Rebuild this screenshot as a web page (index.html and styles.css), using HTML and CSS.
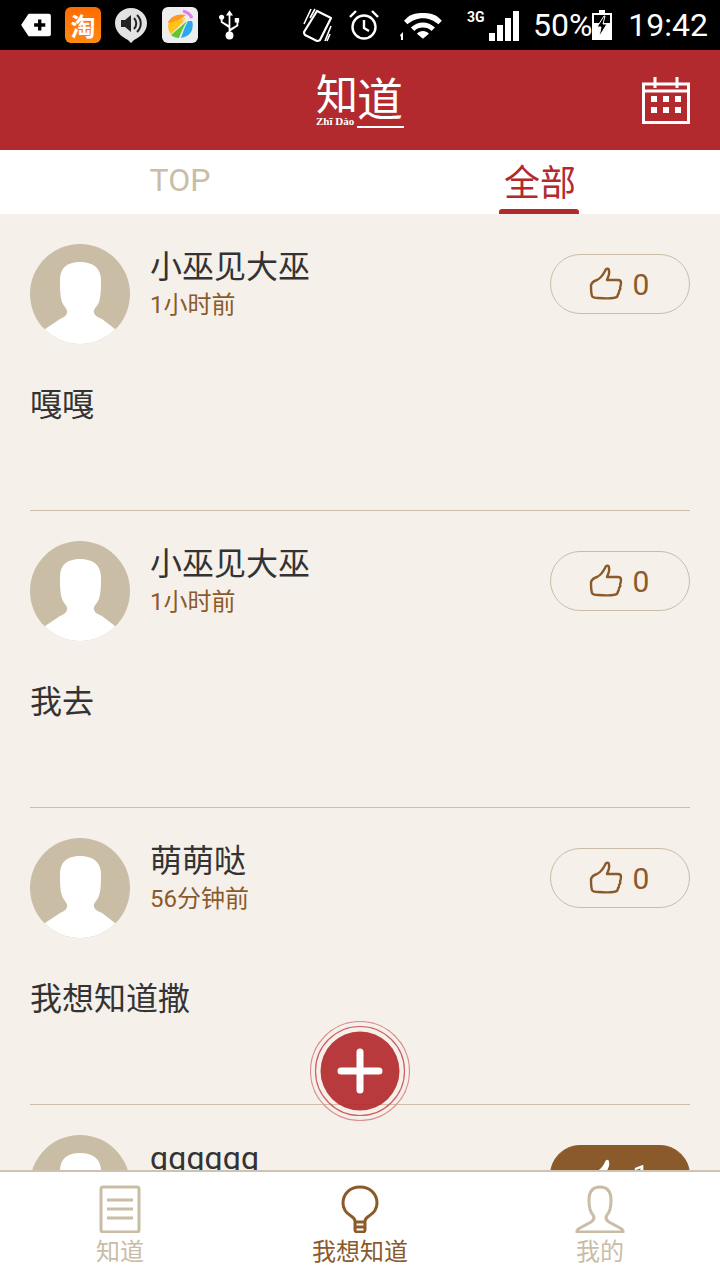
FILE: index.html
```html
<!DOCTYPE html>
<html lang="zh">
<head>
  <meta charset="UTF-8" />
  <title>知道</title>
  <link rel="stylesheet" href="styles.css">
</head>
<body>
  <svg class="defs" width="0" height="0">
    <symbol id="avatar" viewBox="0 0 100 100">
      <circle cx="50" cy="50" r="50" fill="#c9bda6"/>
      <path d="M50 18c-13 0-20 6-20 18 0 7 0 16 2 22 2 5 6 7 5 11-1 3-3 4-7 6L14.650 85.350A50 50 0 0 0 85.350 85.350L72 75c-4-2-7-3-8-6-1-4 3-6 5-11 2-6 2-15 2-22 0-12-8-18-21-18z" fill="#fff"/>
    </symbol>
    <symbol id="thumb" viewBox="0 0 34 34">
      <path d="M2 18c1-3 3-4 6-5 4-2 6-5 8-9 1-3 4-3 4 0 1 3-1 6-2 9h11c2 0 3 1 3 3s0 3-1 4c1 2 0 3-1 4 0 2 0 3-1 3 0 3-2 4-5 4-5 1-10 0-15 0-3 0-5 0-6-2-1-3-1-7-1-11z" fill="none" stroke="currentColor" stroke-width="2.400" stroke-linejoin="round"/>
    </symbol>
    <symbol id="thumb-solid" viewBox="0 0 34 34">
      <path d="M2 18c1-3 3-4 6-5 4-2 6-5 8-9 1-3 4-3 4 0 1 3-1 6-2 9h11c2 0 3 1 3 3s0 3-1 4c1 2 0 3-1 4 0 2 0 3-1 3 0 3-2 4-5 4-5 1-10 0-15 0-3 0-5 0-6-2-1-3-1-7-1-11z" fill="currentColor"/>
    </symbol>
  </svg>

  <div class="statusbar">
    <div class="status-left">
      <svg class="st-icon" width="32" height="26" viewBox="0 0 34 28"><path d="M9 2h22a2 2 0 0 1 2 2v20a2 2 0 0 1-2 2H9L1 14z" fill="#fff"/><path d="M15 14h12M21 8v12" stroke="#000" stroke-width="3.600"/></svg>
      <div class="tao">淘</div>
      <svg class="st-icon" width="34" height="36" viewBox="0 0 34 36"><path d="M17 1c9 0 16 7 16 15 0 9-7 14-13 17l-3 3-3-3C8 30 1 25 1 16 1 8 8 1 17 1z" fill="#e2e2e2"/><path d="M7 13h4l6-5v17l-6-5H7z" fill="#222"/><path d="M20 11c3 3 3 8 0 11M23 8c5 5 5 12 0 17" fill="none" stroke="#222" stroke-width="2"/></svg>
      <svg class="st-icon st-game" width="36" height="36" viewBox="0 0 36 36"><rect width="36" height="36" rx="6" fill="#eeeeee"/><path d="M6 15c3-6 10-9 18-7L9 20z" fill="#ff9a1f"/><path d="M6 17l3 4 15-10-1 0C16 13 10 15 6 17zM6 18c0 4 1 7 3 9l14-14z" fill="#ffc21a"/><path d="M9 28c2 2 5 3 8 3 2-6 5-12 8-17z" fill="#62c634"/><path d="M19 31c5-1 9-3 11-8 1-4 1-7 0-9l-4 0c-3 5-5 11-7 17z" fill="#2aa9ee"/><path d="M21 4c4 1 7 3 9 7" fill="none" stroke="#e37bf0" stroke-width="3"/></svg>
      <svg class="st-icon st-usb" width="21" height="30" viewBox="0 0 24 34"><path d="M12 0l4 6h-3v20h-2V6H8zM13 21l7-4v-3h-2V9h5v5h-1v4l-9 6zM11 17l-7-4v-2a3 3 0 1 0-2 0v3l9 6z" fill="#fff"/><circle cx="12" cy="29" r="4.500" fill="#fff"/></svg>
    </div>
    <div class="status-right">
      <svg class="st-icon" width="30" height="36" viewBox="0 0 30 36"><path d="M15 4l14 7-11 22c-1 1-2 1-3 1L3 28c-1-1-1-2-1-3z" fill="none" stroke="#fff" stroke-width="2.200" stroke-linejoin="round"/><path d="M9 2L2 17M13 2L8 11M29 19l-6 15M28 27l-3 7" fill="none" stroke="#fff" stroke-width="1.600"/></svg>
      <svg class="st-icon alarm" width="32" height="32" viewBox="0 0 32 32"><circle cx="16" cy="18" r="11.500" fill="none" stroke="#fff" stroke-width="2.400"/><path d="M16 11v8l5 3M2 8l6-6M30 8l-6-6" fill="none" stroke="#fff" stroke-width="2.400"/></svg>
      <svg class="st-icon wifi" width="44" height="30" viewBox="0 0 44 30"><path d="M0 9l3-3c5-5 12-6 19-6s14 1 19 6l3 3-4 4C35 9 29 6 22 6S9 9 4 13zM8 17c4-4 9-6 14-6s10 2 14 6l-4 4c-3-3-6-4-10-4s-7 1-10 4zM15 24c2-2 4-3 7-3s5 1 7 3l-7 6z" fill="#fff" transform="translate(5 3) scale(.86)"/><path d="M1 25l3-3v8H2v-3z" fill="#fff"/></svg>
      <div class="signal">
        <span class="net">3G</span>
        <i class="b1"></i><i class="b2"></i><i class="b3"></i><i class="b4"></i>
      </div>
      <span class="st-text pct">50%</span>
      <svg class="st-icon batt" width="20" height="30" viewBox="0 0 20 30"><path d="M7 0h6v3h7v27H0V3h7z" fill="#fff"/><path d="M2 5h16v8H2z" fill="#000"/><path d="M12 6l-7 11h4l-2 10 8-13h-4l2-8z" fill="#000" stroke="#fff" stroke-width="1"/></svg>
      <span class="st-text clock">19:42</span>
    </div>
  </div>

  <div class="header">
    <div class="logo">
      <div class="logo-left">
        <span class="logo-zhi">知</span>
        <span class="logo-pin">Zhī Dào</span>
      </div>
      <span class="logo-dao">道</span>
    </div>
    <svg class="calendar" width="48" height="48" viewBox="0 0 48 48">
      <path d="M1.500 8h45v38.500h-45zM1.500 15h45M13 1v11M35 1v11" fill="none" stroke="#fff" stroke-width="3"/>
      <path d="M9 20h6v6H9zM21 20h6v6h-6zM33 20h6v6h-6zM9 31h6v6H9zM21 31h6v6h-6zM33 31h6v6h-6z" fill="#fff"/>
    </svg>
  </div>

  <div class="tabs">
    <div class="tab">TOP</div>
    <div class="tab active">全部</div>
  </div>

  <div class="list">
    <div class="item">
      <div class="item-head">
        <svg class="avatar"><use href="#avatar"/></svg>
        <div class="who"><div class="name">小巫见大巫</div><div class="time">1小时前</div></div>
        <div class="like"><svg class="thumb"><use href="#thumb"/></svg><span>0</span></div>
      </div>
      <div class="body">嘎嘎</div>
    </div>
    <div class="item">
      <div class="item-head">
        <svg class="avatar"><use href="#avatar"/></svg>
        <div class="who"><div class="name">小巫见大巫</div><div class="time">1小时前</div></div>
        <div class="like"><svg class="thumb"><use href="#thumb"/></svg><span>0</span></div>
      </div>
      <div class="body">我去</div>
    </div>
    <div class="item">
      <div class="item-head">
        <svg class="avatar"><use href="#avatar"/></svg>
        <div class="who"><div class="name">萌萌哒</div><div class="time">56分钟前</div></div>
        <div class="like"><svg class="thumb"><use href="#thumb"/></svg><span>0</span></div>
      </div>
      <div class="body">我想知道撒</div>
    </div>
    <div class="item">
      <div class="item-head">
        <svg class="avatar"><use href="#avatar"/></svg>
        <div class="who"><div class="name">qqqqqq</div></div>
        <div class="like liked"><svg class="thumb"><use href="#thumb-solid"/></svg><span>1</span></div>
      </div>
    </div>
  </div>

  <div class="fab">
    <svg width="100" height="100" viewBox="0 0 100 100">
      <circle cx="50" cy="50" r="49.500" fill="none" stroke="#d98f90" stroke-width="1.200"/>
      <circle cx="50" cy="50" r="44.500" fill="none" stroke="#cf5f62" stroke-width="1.200"/>
      <circle cx="50" cy="50" r="39.500" fill="#b32a2e" fill-opacity=".92"/>
      <path d="M31 50h38M50 31v38" stroke="#fff" stroke-width="7" stroke-linecap="round"/>
    </svg>
  </div>

  <div class="nav">
    <div class="nav-item">
      <svg width="42" height="48" viewBox="0 0 42 48"><rect x="2" y="2" width="38" height="45" rx="2" fill="none" stroke="currentColor" stroke-width="3"/><path d="M8 15h26M8 24h26M8 33h26" stroke="currentColor" stroke-width="3"/></svg>
      <span>知道</span>
    </div>
    <div class="nav-item active">
      <svg width="38" height="48" viewBox="0 0 38 48"><path d="M19 2C9 2 2 9 2 18c0 6 3 10 8 13 3 2 4 3 4 5v9c0 1 1 2 2 2h6c1 0 2-1 2-2v-9c0-2 1-3 4-5 5-3 8-7 8-13C36 9 29 2 19 2zM14 37h10M14 42h10" fill="none" stroke="currentColor" stroke-width="3"/></svg>
      <span>我想知道</span>
    </div>
    <div class="nav-item">
      <svg width="50" height="48" viewBox="0 0 50 48"><path d="M25 2c-9 0-11 6-11 13 0 6 1 12 4 15 2 3 1 5-2 7l-11 6c-2 1-3 2-3 3v1h46v-1c0-1-1-2-3-3l-11-6c-3-2-4-4-2-7 3-3 4-9 4-15 0-7-2-13-11-13z" fill="none" stroke="currentColor" stroke-width="3" stroke-linejoin="round"/></svg>
      <span>我的</span>
    </div>
  </div>
</body>
</html>
```
FILE: styles.css
```css
* {
  box-sizing: border-box;
}

html, body {
  margin: 0;
  height: 1280px;
  overflow: hidden;
}

body {
  position: relative;
  display: flex;
  flex-direction: column;
  font-family: "Noto Sans CJK SC", "Noto Sans", sans-serif;
  background: #f5f0ea;
}

.defs {
  position: absolute;
}

.statusbar {
  flex: none;
  height: 50px;
  background: #000;
  color: #fff;
  display: flex;
  justify-content: space-between;
  align-items: center;
  padding: 0 12px 0 20px;
}

.status-left, .status-right {
  display: flex;
  align-items: center;
}

.status-left {
  gap: 13px;
}

.st-icon {
  display: block;
  flex: none;
}

.tao {
  width: 36px;
  height: 36px;
  border-radius: 6px;
  background: linear-gradient(#ff6a00, #ff8a10);
  color: #fff;
  font-size: 25px;
  font-weight: 700;
  line-height: 36px;
  text-align: center;
}

.st-game {
  margin-left: 1px;
}

.st-usb {
  margin-left: 8px;
}

.alarm {
  margin-left: 16px;
}

.wifi {
  margin-left: 19px;
}

.signal {
  position: relative;
  width: 52px;
  height: 34px;
  margin-left: 24px;
  display: flex;
  align-items: flex-end;
  justify-content: flex-end;
  gap: 2px;
}

.signal i {
  width: 6px;
  background: #fff;
  margin-bottom: 1px;
}

.signal .b1 { height: 8px; }
.signal .b2 { height: 16px; }
.signal .b3 { height: 23px; }
.signal .b4 { height: 30px; }

.net {
  position: absolute;
  left: 0;
  top: 1px;
  font: 700 14px "Roboto", sans-serif;
}

.st-text {
  font-family: "Roboto", sans-serif;
  font-size: 32px;
  line-height: 50px;
}

.pct {
  margin-left: 14px;
}

.clock {
  margin-left: 16px;
}

.header {
  position: relative;
  flex: none;
  height: 100px;
  background: #b32a2e;
  display: flex;
  align-items: center;
  justify-content: flex-end;
  padding-right: 30px;
}

.logo {
  position: absolute;
  left: 316px;
  top: 20px;
  height: 58px;
  color: #fff;
  display: flex;
  align-items: flex-start;
}

.logo-left {
  display: flex;
  flex-direction: column;
  width: 41px;
}

.logo-zhi {
  font-size: 42px;
  line-height: 44px;
}

.logo-pin {
  font: 700 11px/14px "Liberation Serif", serif;
  white-space: nowrap;
}

.logo-dao {
  width: 47px;
  height: 58px;
  border-bottom: 2px solid #fff;
  font-size: 46px;
  line-height: 52px;
}

.tabs {
  flex: none;
  height: 64px;
  background: #fff;
  display: flex;
}

.tab {
  position: relative;
  flex: 1;
  text-align: center;
  font-family: "Roboto", "Noto Sans CJK SC", sans-serif;
  font-size: 32px;
  line-height: 61px;
  color: #c9bda6;
}

.tab.active {
  color: #b32a2e;
  font-size: 36px;
  line-height: 68px;
}

.tab.active::after {
  content: "";
  position: absolute;
  left: 139px;
  bottom: 0;
  width: 80px;
  height: 5px;
  background: #b32a2e;
  border-radius: 3px 3px 0 0;
}

.list {
  flex: 1;
  overflow: hidden;
  padding: 0 30px;
}

.item {
  height: 297px;
  padding-top: 30px;
  border-bottom: 1px solid #cdbfa7;
}

.item-head {
  display: flex;
  align-items: flex-start;
}

.avatar {
  flex: none;
  width: 100px;
  height: 100px;
}

.who {
  flex: 1;
  margin-left: 20px;
  padding-top: 2px;
}

.name {
  font-family: "Roboto", "Noto Sans CJK SC", sans-serif;
  font-size: 32px;
  line-height: 42px;
  color: #333;
}

.time {
  font-family: "Roboto", "Noto Sans CJK SC", sans-serif;
  font-size: 24px;
  line-height: 34px;
  color: #8b5a2b;
}

.like {
  flex: none;
  width: 140px;
  height: 60px;
  margin-top: 10px;
  padding-right: 2px;
  border: 1px solid #c9bda6;
  border-radius: 30px;
  display: flex;
  align-items: center;
  justify-content: center;
  gap: 10px;
  color: #8b5a2b;
  font-family: "Roboto", sans-serif;
  font-size: 30px;
}

.like.liked {
  background: #8b5a2b;
  border-color: #8b5a2b;
  color: #fff;
}

.thumb {
  width: 34px;
  height: 34px;
}

.body {
  margin-top: 34px;
  font-size: 32px;
  line-height: 48px;
  color: #333;
}

.fab {
  position: absolute;
  left: 310px;
  top: 1021px;
  width: 100px;
  height: 100px;
}

.nav {
  flex: none;
  position: relative;
  height: 110px;
  background: #fff;
  border-top: 2px solid #cdc3b0;
  display: flex;
}

.nav-item {
  flex: 1;
  display: flex;
  flex-direction: column;
  align-items: center;
  padding-top: 13px;
  color: #c9bda6;
}

.nav-item.active {
  color: #8b5a2b;
}

.nav-item svg {
  display: block;
  height: 48px;
}

.nav-item span {
  font-size: 24px;
  line-height: 34px;
}
```
